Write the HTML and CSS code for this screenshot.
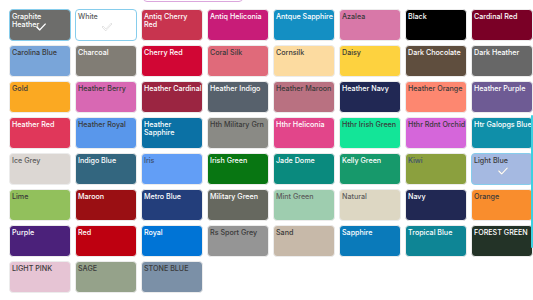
FILE: index.html
```html
<!DOCTYPE html>
<html lang="en">
<head>
    <meta charset="UTF-8">
    <meta name="viewport" content="width=device-width, initial-scale=1.0">
    <title>Colour Picker</title>
    <link rel="stylesheet" href="styles.css">
</head>
<body>
    <div class="toolbar">
        <div class="pick-btn"></div>
    </div>

    <div class="swatches">
        <div class="swatch light selected" style="background:#6d6d6b"><span>Graphite<br>Heather</span><svg class="check" viewBox="0 0 12 9"><polyline points="1,4.5 4.5,8 11,1"/></svg></div>
        <div class="swatch selected" style="background:#ffffff"><span class="muted">White</span><svg class="check" viewBox="0 0 12 9"><polyline points="1,4.5 4.5,8 11,1"/></svg></div>
        <div class="swatch light" style="background:#c8344f"><span>Antiq Cherry<br>Red</span></div>
        <div class="swatch light" style="background:#c81c78"><span>Antiq Heliconia</span></div>
        <div class="swatch light" style="background:#148fc3"><span>Antque Sapphire</span></div>
        <div class="swatch" style="background:#d878a8"><span>Azalea</span></div>
        <div class="swatch light" style="background:#000000"><span>Black</span></div>
        <div class="swatch light" style="background:#7a0026"><span>Cardinal Red</span></div>

        <div class="swatch" style="background:#79a5d9"><span>Carolina Blue</span></div>
        <div class="swatch light" style="background:#817d75"><span>Charcoal</span></div>
        <div class="swatch light" style="background:#d10634"><span>Cherry Red</span></div>
        <div class="swatch" style="background:#e06a7a"><span>Coral Silk</span></div>
        <div class="swatch" style="background:#fcdba0"><span>Cornsilk</span></div>
        <div class="swatch" style="background:#fdd23f"><span>Daisy</span></div>
        <div class="swatch light" style="background:#5f4e3e"><span>Dark Chocolate</span></div>
        <div class="swatch light" style="background:#676767"><span>Dark Heather</span></div>

        <div class="swatch" style="background:#fba922"><span>Gold</span></div>
        <div class="swatch" style="background:#d868b3"><span>Heather Berry</span></div>
        <div class="swatch light" style="background:#9b2541"><span>Heather Cardinal</span></div>
        <div class="swatch light" style="background:#57616c"><span>Heather Indigo</span></div>
        <div class="swatch" style="background:#b97181"><span>Heather Maroon</span></div>
        <div class="swatch light" style="background:#212854"><span>Heather Navy</span></div>
        <div class="swatch" style="background:#fd8770"><span>Heather Orange</span></div>
        <div class="swatch light" style="background:#6e5b94"><span>Heather Purple</span></div>

        <div class="swatch light" style="background:#e0375a"><span>Heather Red</span></div>
        <div class="swatch" style="background:#5997eb"><span>Heather Royal</span></div>
        <div class="swatch light" style="background:#0b71a5"><span>Heather<br>Sapphire</span></div>
        <div class="swatch" style="background:#8a8a85"><span>Hth Military Grn</span></div>
        <div class="swatch light" style="background:#e2458a"><span>Hthr Heliconia</span></div>
        <div class="swatch" style="background:#13e598"><span>Hthr Irish Green</span></div>
        <div class="swatch" style="background:#d566da"><span>Hthr Rdnt Orchid</span></div>
        <div class="swatch light" style="background:#0f8fa9"><span>Htr Galopgs Blue</span></div>

        <div class="swatch" style="background:#dcd7d3"><span class="muted">Ice Grey</span></div>
        <div class="swatch light" style="background:#33667f"><span>Indigo Blue</span></div>
        <div class="swatch" style="background:#629ef6"><span class="soft">Iris</span></div>
        <div class="swatch light" style="background:#087612"><span>Irish Green</span></div>
        <div class="swatch light" style="background:#0a8a7e"><span>Jade Dome</span></div>
        <div class="swatch light" style="background:#17996b"><span>Kelly Green</span></div>
        <div class="swatch" style="background:#8ba03e"><span class="soft">Kiwi</span></div>
        <div class="swatch selected" style="background:#a5b9e1"><span>Light Blue</span><svg class="check" viewBox="0 0 12 9"><polyline points="1,4.5 4.5,8 11,1"/></svg></div>

        <div class="swatch" style="background:#92c05c"><span>Lime</span></div>
        <div class="swatch light" style="background:#9a0f13"><span>Maroon</span></div>
        <div class="swatch light" style="background:#233e7b"><span>Metro Blue</span></div>
        <div class="swatch light" style="background:#66685f"><span>Military Green</span></div>
        <div class="swatch" style="background:#9ecdaf"><span class="muted">Mint Green</span></div>
        <div class="swatch" style="background:#ddd7c3"><span class="muted">Natural</span></div>
        <div class="swatch light" style="background:#212853"><span>Navy</span></div>
        <div class="swatch" style="background:#f98d2d"><span>Orange</span></div>

        <div class="swatch light" style="background:#4b217a"><span>Purple</span></div>
        <div class="swatch light" style="background:#be0010"><span>Red</span></div>
        <div class="swatch light" style="background:#0074d6"><span>Royal</span></div>
        <div class="swatch" style="background:#959595"><span>Rs Sport Grey</span></div>
        <div class="swatch" style="background:#c7b9a9"><span>Sand</span></div>
        <div class="swatch light" style="background:#0a7aba"><span>Sapphire</span></div>
        <div class="swatch light" style="background:#0e8595"><span>Tropical Blue</span></div>
        <div class="swatch light" style="background:#233327"><span>FOREST GREEN</span></div>

        <div class="swatch" style="background:#e6c4d4"><span>LIGHT PINK</span></div>
        <div class="swatch" style="background:#95a28a"><span>SAGE</span></div>
        <div class="swatch" style="background:#7b90a7"><span>STONE BLUE</span></div>
    </div>

    <div class="edge-bar"></div>
</body>
</html>
```

FILE: styles.css
```css
html, body {
    margin: 0;
    padding: 0;
}
body {
    font-family: Inter, "Liberation Sans", sans-serif;
    background: #ffffff;
    width: 533px;
    height: 300px;
    overflow: hidden;
    position: relative;
}
.toolbar {
    display: flex;
    padding-left: 143px;
    margin-top: -20px;
    height: 22px;
}
.pick-btn {
    box-sizing: border-box;
    width: 100px;
    height: 22px;
    border: 1px solid #dba6dd;
    border-radius: 4px;
    background: #ffffff;
}
.swatches {
    display: grid;
    grid-template-columns: repeat(8, 62px);
    grid-auto-rows: 32px;
    gap: 4px;
    padding: 7px 0 0 9px;
}
.swatch {
    position: relative;
    box-sizing: border-box;
    border: 1px solid #ececec;
    border-radius: 4px;
    padding: 2.5px 0 0 2px;
    font-size: 7.15px;
    font-weight: 500;
    line-height: 8.6px;
    white-space: nowrap;
    color: #3a3a3a;
    overflow: hidden;
}
.swatch.light {
    color: #ffffff;
}
.swatch.selected {
    border-color: #86cdec;
}
.swatch .muted {
    color: #5c5c5c;
}
.swatch .soft {
    color: #3d4f6e;
}
.check {
    position: absolute;
    left: 50%;
    top: 50%;
    width: 10px;
    height: 8px;
    margin: -2px 0 0 -4px;
    overflow: visible;
    filter: drop-shadow(0 0 0.6px #8a8a8a);
}
.check polyline {
    fill: none;
    stroke: #ffffff;
    stroke-width: 1.6;
    stroke-linecap: round;
    stroke-linejoin: round;
}
.edge-bar {
    position: absolute;
    right: 0;
    top: 115px;
    width: 2px;
    height: 133px;
    border-radius: 1px;
    background: #3ed0e0;
}
```
